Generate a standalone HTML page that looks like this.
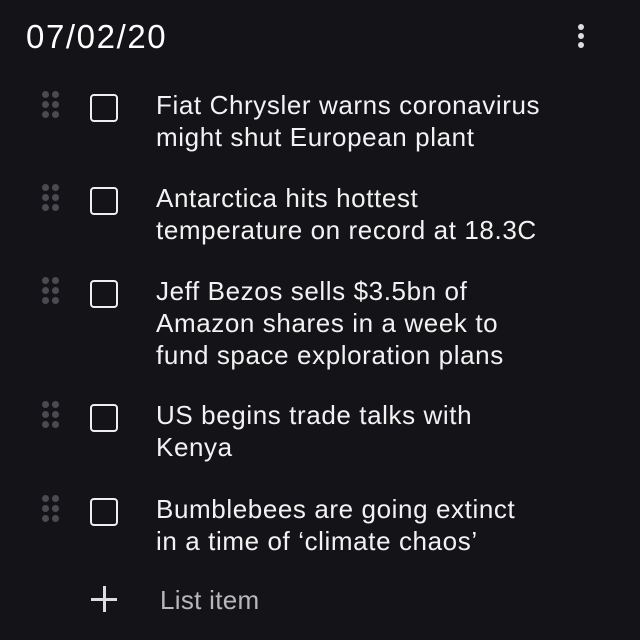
<!DOCTYPE html>
<html><head><style>
body{margin:0;width:640px;height:640px;background:#141418;color:#fff;font-family:"Liberation Sans",sans-serif;position:relative;overflow:hidden}
.t{position:absolute;left:26px;top:18px;font-size:33px;letter-spacing:1.6px}
.m{position:absolute;left:578px;top:24px}
.m i{display:block;width:6px;height:6px;border-radius:50%;background:#ddd;margin-bottom:3px}
.it{position:absolute;left:0;width:640px}
.d{position:absolute;left:42px;top:-2px;width:24px}
.d i{float:left;width:7px;height:7px;border-radius:50%;background:#4a4a50;margin:0 3px 3px 0}
.c{position:absolute;left:90px;top:1px;width:24px;height:24px;border:2.5px solid #eee;border-radius:4px}
.x{position:absolute;left:156px;top:-4px;font-size:26px;line-height:32px;color:#f2f2f2;letter-spacing:0.6px;white-space:nowrap}
</style></head><body>
<div class="t">07/02/20</div>
<div class="m"><i></i><i></i><i></i></div>
<div class="it" style="top:93px"><div class="d"><i></i><i></i><i></i><i></i><i></i><i></i></div><div class="c"></div><div class="x">Fiat Chrysler warns coronavirus<br>might shut European plant</div></div>
<div class="it" style="top:186px"><div class="d"><i></i><i></i><i></i><i></i><i></i><i></i></div><div class="c"></div><div class="x">Antarctica hits hottest<br>temperature on record at 18.3C</div></div>
<div class="it" style="top:279px"><div class="d"><i></i><i></i><i></i><i></i><i></i><i></i></div><div class="c"></div><div class="x">Jeff Bezos sells $3.5bn of<br>Amazon shares in a week to<br>fund space exploration plans</div></div>
<div class="it" style="top:403px"><div class="d"><i></i><i></i><i></i><i></i><i></i><i></i></div><div class="c"></div><div class="x">US begins trade talks with<br>Kenya</div></div>
<div class="it" style="top:497px"><div class="d"><i></i><i></i><i></i><i></i><i></i><i></i></div><div class="c"></div><div class="x">Bumblebees are going extinct<br>in a time of ‘climate chaos’</div></div>
<div style="position:absolute;left:90px;top:585px;width:28px;height:28px">
<div style="position:absolute;left:13px;top:1px;width:2.5px;height:26px;background:#ddd"></div>
<div style="position:absolute;left:1px;top:13px;width:26px;height:2.5px;background:#ddd"></div></div>
<div style="position:absolute;left:160px;top:585px;font-size:26px;letter-spacing:0.3px;color:#b8b8bc">List item</div>
</body></html>
